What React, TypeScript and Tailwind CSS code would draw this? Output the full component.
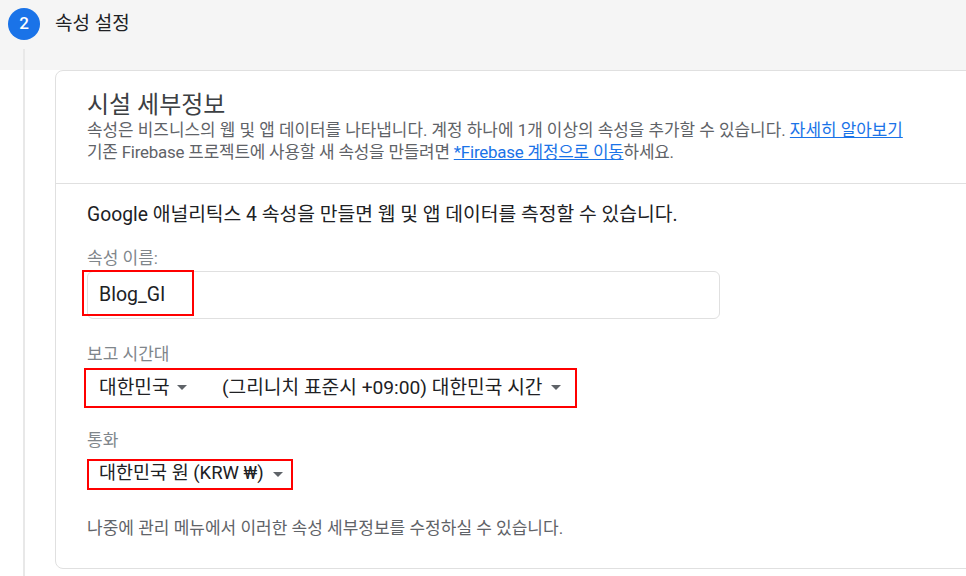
import React from 'react'

const font = {
  fontFamily: 'Roboto, "Noto Sans CJK KR", "Noto Sans", sans-serif',
}

const Caret = ({ gap }: { gap: string }) => (
  <svg width="10" height="5" viewBox="0 0 10 5" className={gap}>
    <path d="M0 0 L10 0 L5 5 Z" fill="#5f6368" />
  </svg>
)

const App = () => {
  return (
    <div
      className="w-[966px] h-[576px] overflow-hidden bg-white text-[#202124]"
      style={font}
    >
      {/* step header */}
      <div className="h-[70px] bg-[#f5f5f5] flex">
        <div className="w-[55px] flex flex-col">
          <div className="mt-[8px] ml-[8px] w-[32px] h-[32px] rounded-full bg-[#1a73e8] text-white text-[17px] font-medium flex items-center justify-center">
            2
          </div>
          <div className="mt-[9px] ml-[23px] w-[2px] flex-1 bg-[#e8e8e8]" />
        </div>
        <div className="pt-[11px] text-[19px] leading-[26px]">속성 설정</div>
      </div>

      <div className="flex">
        <div className="w-[55px] shrink-0">
          <div className="ml-[23px] w-[2px] h-[506px] bg-[#e8e8e8]" />
        </div>

        <div className="w-[960px] shrink-0 h-[499px] border border-[#e0e0e0] rounded-[8px] bg-white">
          {/* card header */}
          <div className="px-[31px] pt-[21px] pb-[20px] border-b border-[#e0e0e0]">
            <div className="text-[24px] leading-[27px] text-[#3c4043]">
              시설 세부정보
            </div>
            <div className="text-[16.9px] leading-[22px] text-[#5f6368]">
              속성은 비즈니스의 웹 및 앱 데이터를 나타냅니다. 계정 하나에 1개
              이상의 속성을 추가할 수 있습니다.{' '}
              <span className="text-[#1a73e8] underline">자세히 알아보기</span>
            </div>
            <div className="text-[16.9px] leading-[22px] text-[#5f6368] tracking-[-0.2px]">
              기존 Firebase 프로젝트에 사용할 새 속성을 만들려면{' '}
              <span className="text-[#1a73e8] underline">
                *Firebase 계정으로 이동
              </span>
              하세요.
            </div>
          </div>

          {/* card body */}
          <div className="px-[31px] pt-[19px]">
            <div className="text-[19.3px] leading-[24px]">
              Google 애널리틱스 4 속성을 만들면 웹 및 앱 데이터를 측정할 수
              있습니다.
            </div>

            <div className="mt-[21px] text-[17px] leading-[20px] text-[#80868b]">
              속성 이름:
            </div>
            <div className="relative mt-[3px] w-[633px] h-[48px] border border-[#e0e0e0] rounded-[6px] flex items-center px-[11px] text-[19.5px]">
              Blog_GI
              <div className="absolute left-[-6px] top-[-2px] w-[112px] h-[46px] border-2 border-[#ff0000]" />
            </div>

            <div className="mt-[25px] text-[17px] leading-[20px] text-[#80868b]">
              보고 시간대
            </div>
            <div className="relative mt-[6px] h-[36px] flex items-center text-[19.2px]">
              <div className="w-[135px] pl-[12px] flex items-center">
                대한민국
                <Caret gap="ml-[7px]" />
              </div>
              <div className="flex items-center">
                (그리니치 표준시 +09:00) 대한민국 시간
                <Caret gap="ml-[9px]" />
              </div>
              <div className="absolute left-[-3px] top-[-2px] w-[493px] h-[40px] border-2 border-[#ff0000]" />
            </div>

            <div className="mt-[24px] text-[17px] leading-[20px] text-[#80868b]">
              통화
            </div>
            <div className="relative mt-[8px] h-[32px] flex items-center text-[18.5px]">
              <div className="pl-[12px] flex items-center">
                대한민국 원 (KRW ₩)
                <Caret gap="ml-[9px]" />
              </div>
              <div className="absolute left-0 top-[1px] w-[206px] h-[31px] border-2 border-[#ff0000]" />
            </div>

            <div className="mt-[28px] text-[17px] leading-[20px] text-[#5f6368]">
              나중에 관리 메뉴에서 이러한 속성 세부정보를 수정하실 수 있습니다.
            </div>
          </div>
        </div>
      </div>
    </div>
  )
}

export default App
